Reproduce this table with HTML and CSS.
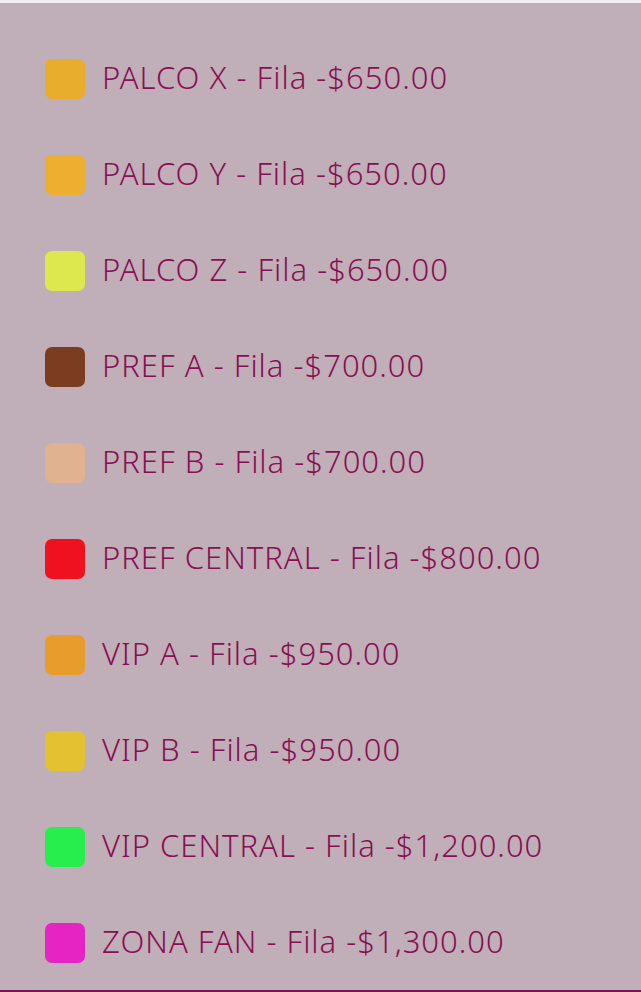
FILE: index.html
```html
<!DOCTYPE html>
<html lang="es">
<head>
<meta charset="utf-8">
<link rel="stylesheet" href="styles.css">
</head>
<body>
<ul class="legend">
  <li class="item"><span class="swatch" style="background:#e9ad2e"></span><span class="label">PALCO X - Fila -$650.00</span></li>
  <li class="item"><span class="swatch" style="background:#eeae2f"></span><span class="label">PALCO Y - Fila -$650.00</span></li>
  <li class="item"><span class="swatch" style="background:#dce84e"></span><span class="label">PALCO Z - Fila -$650.00</span></li>
  <li class="item"><span class="swatch" style="background:#7b3c20"></span><span class="label">PREF A - Fila -$700.00</span></li>
  <li class="item"><span class="swatch" style="background:#e0b290"></span><span class="label">PREF B - Fila -$700.00</span></li>
  <li class="item"><span class="swatch" style="background:#ef1020"></span><span class="label">PREF CENTRAL - Fila -$800.00</span></li>
  <li class="item"><span class="swatch" style="background:#e79c2b"></span><span class="label">VIP A - Fila -$950.00</span></li>
  <li class="item"><span class="swatch" style="background:#e4c130"></span><span class="label">VIP B - Fila -$950.00</span></li>
  <li class="item"><span class="swatch" style="background:#27ed4d"></span><span class="label">VIP CENTRAL - Fila -$1,200.00</span></li>
  <li class="item"><span class="swatch" style="background:#e624c3"></span><span class="label">ZONA FAN - Fila -$1,300.00</span></li>
</ul>
</body>
</html>
```
FILE: styles.css
```css
html, body {
  margin: 0;
  padding: 0;
}
body {
  background: #f1eff1;
  padding-top: 3px;
  font-family: "Noto Sans", "Liberation Sans", sans-serif;
}
.legend {
  list-style: none;
  margin: 0;
  background: #c0aeb8;
  border-bottom: 2px solid #7d1452;
  padding: 56px 0 27px 45px;
  display: flex;
  flex-direction: column;
  gap: 56px;
}
.item {
  display: flex;
  align-items: center;
  gap: 17px;
  height: 40px;
}
.swatch {
  width: 40px;
  height: 40px;
  border-radius: 7px;
  flex: none;
}
.label {
  color: #8a0f52;
  font-size: 31px;
  font-weight: 300;
  letter-spacing: 1px;
  line-height: 40px;
  white-space: nowrap;
  position: relative;
  top: -2px;
}
```
